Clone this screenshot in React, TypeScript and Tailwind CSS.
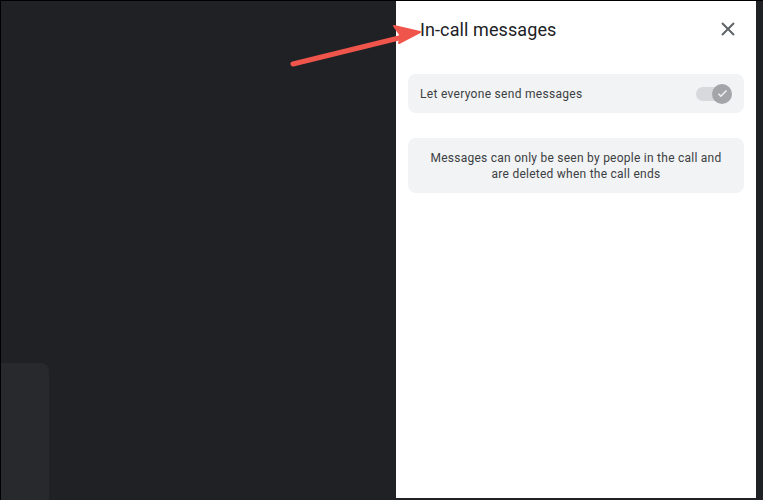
import React from 'react';

const App: React.FC = () => {
  return (
    <div className="relative w-[763px] h-[500px] bg-[#202124] border-t border-l border-black flex pr-[7px] pb-[2px] overflow-hidden font-['Roboto','Liberation_Sans',sans-serif]">
      {/* Video area */}
      <div className="flex-1 flex flex-col justify-end">
        <div className="w-[48px] h-[137px] bg-[#28292c] rounded-tr-lg mb-[-2px]" />
      </div>

      {/* Side panel */}
      <aside className="w-[360px] bg-white flex flex-col">
        <div className="flex items-center justify-between h-[56px] pl-6 pr-4">
          <h2 className="text-[18px] text-[#202124] tracking-[0.1px]">In-call messages</h2>
          <button className="w-6 h-6 flex items-center justify-center text-[#5f6368]">
            <svg width="14" height="14" viewBox="0 0 14 14" fill="none" stroke="currentColor" strokeWidth="2">
              <path d="M1 1l12 12M13 1L1 13" />
            </svg>
          </button>
        </div>

        <div className="px-3 mt-[17px] flex flex-col gap-[25px]">
          <div className="h-[39px] bg-[#f1f3f4] rounded-lg flex items-center justify-between pl-3 pr-[12px]">
            <span className="text-[12px] text-[#3c4043] tracking-[0.3px]">Let everyone send messages</span>
            <div className="relative w-[36px] h-[20px] flex items-center">
              <div className="w-[33px] h-[14px] rounded-full bg-[#d7d9dc]" />
              <div className="absolute right-0 top-0 w-[20px] h-[20px] rounded-full bg-[#a3a5a8] flex items-center justify-center">
                <svg width="13" height="13" viewBox="0 0 24 24" fill="none" stroke="#eeefef" strokeWidth="3">
                  <path d="M4.5 12.5l4.5 4.5L19.5 6.5" />
                </svg>
              </div>
            </div>
          </div>

          <div className="h-[55px] bg-[#f1f3f4] rounded-lg flex items-center justify-center text-center px-4">
            <p className="text-[12px] leading-[16px] text-[#3c4043] tracking-[0.25px]">
              Messages can only be seen by people in the call and
              <br />
              are deleted when the call ends
            </p>
          </div>
        </div>
      </aside>

      {/* Annotation arrow */}
      <svg className="absolute left-0 top-0 pointer-events-none" width="763" height="500">
        <line x1="292" y1="63" x2="402" y2="36" stroke="#f0554c" strokeWidth="5" strokeLinecap="round" />
        <path d="M419 31 L393 25 L400 35 L398 42 Z" fill="#f0554c" stroke="#f0554c" strokeWidth="2" strokeLinejoin="round" />
      </svg>
    </div>
  );
};

export default App;
